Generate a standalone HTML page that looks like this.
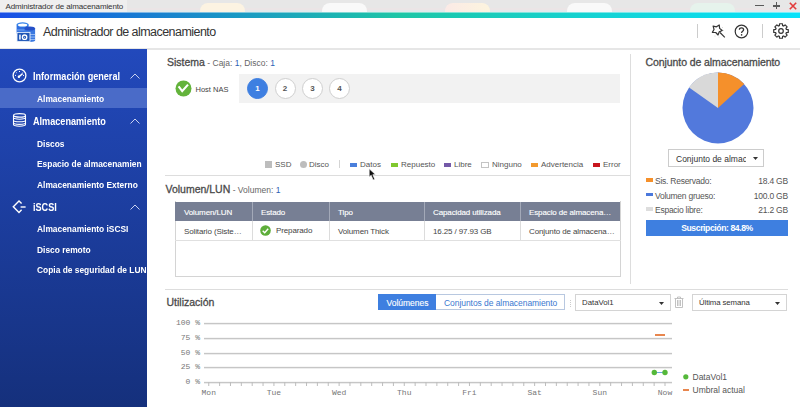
<!DOCTYPE html>
<html><head><meta charset="utf-8">
<style>
*{margin:0;padding:0;box-sizing:border-box}
html,body{width:800px;height:407px;overflow:hidden;background:#fff;font-family:"Liberation Sans",sans-serif;color:#333}
.a{position:absolute;white-space:nowrap;line-height:1}
#tb{position:absolute;left:0;top:0;width:800px;height:12px;background:#e7e7e7;overflow:hidden}
.blob{position:absolute;top:2.5px;width:45px;height:14px;border-radius:8px 8px 0 0;filter:blur(0.6px)}
#gl{position:absolute;left:0;top:12px;width:800px;height:6px;background:linear-gradient(90deg,#1a4fe6 0%,#1670d8 12.5%,#1a9cc2 31%,#1dc6a6 50%,#14d3d4 75%,#06e2fa 100%)}
#gl2{position:absolute;left:0;top:12px;width:800px;height:1px;background:rgba(255,255,255,0.45)}
#hd{position:absolute;left:0;top:18px;width:800px;height:32px;background:#fff;border-bottom:2px solid #e6e6e6}
#sb{position:absolute;z-index:2;left:0;top:48.5px;width:147px;height:358.5px;background:linear-gradient(180deg,#2249bc 0%,#15307c 100%);overflow:hidden}
.sh{position:absolute;white-space:nowrap;line-height:1;left:33px;color:#fff;font-weight:bold;font-size:10.5px;transform:scaleX(0.867);transform-origin:0 0}
.si{position:absolute;white-space:nowrap;line-height:1;left:37px;color:#fff;font-weight:bold;font-size:9.8px;transform:scaleX(0.857);transform-origin:0 0}
.chev{position:absolute;left:130px;width:10px;height:6px}
.sel{position:absolute;left:0;width:147px;height:20px;background:#4a6bc8}
.gray{color:#666}
.blue{color:#2c62b4}
.circ{position:absolute;width:21px;height:21px;border-radius:50%;border:1px solid #cfcfcf;background:#fff;font-size:8px;font-weight:bold;text-align:center;line-height:19px;color:#555}
.lg{position:absolute;top:159.8px;font-size:8px;color:#555}
.sw{position:absolute;top:162.5px;width:7px;height:4px}
.th{position:absolute;top:202px;height:19px;background:#777f94;color:#fff;font-size:8px}
.td{position:absolute;font-size:8px;color:#444;letter-spacing:-0.12px}
.ya{position:absolute;font-family:"Liberation Mono",monospace;font-size:8px;color:#777;text-align:right;width:30px}
.xa{position:absolute;font-family:"Liberation Mono",monospace;font-size:8px;color:#777}
.gln{position:absolute;left:204px;width:468px;height:1px;background:#c6c6c6;box-shadow:0 1px 0 #ededed,0 -1px 0 #f6f6f6}
.rl{position:absolute;left:655px;font-size:8.5px;color:#555;letter-spacing:-0.25px}
.rv{position:absolute;right:12px;font-size:8.5px;color:#555;text-align:right;letter-spacing:-0.2px}
</style></head><body>

<!-- title bar -->
<div id="tb">
  <div style="position:absolute;left:0;top:8px;width:800px;height:4px;background:linear-gradient(180deg,#ebe5e6 0,#ebe5e6 45%,#e2e9eb 55%,#e2e9eb 100%)"></div>
    <div style="position:absolute;left:0;top:0;width:127px;height:12px;background:#efefef"></div>
  <div class="blob" style="left:200px;background:#fcf3e2"></div>
  <div class="blob" style="left:322px;background:#f9f9f9"></div>
  <div class="blob" style="left:445px;background:linear-gradient(90deg,#fbeae6,#fcf4de)"></div>
  <div class="blob" style="left:567px;background:#f9f9f9"></div>
  <div class="blob" style="left:690px;background:#e6f3ec"></div>
  <div class="a" style="left:5.5px;top:2.7px;font-size:8px;color:#333;letter-spacing:-0.12px">Administrador de almacenamiento</div>
  <div style="position:absolute;left:755px;top:4.8px;width:8.6px;height:1.7px;background:#5a5a5a"></div>
  <div style="position:absolute;left:772.6px;top:5px;width:7.4px;height:1.7px;background:#5a5a5a"></div>
  <div style="position:absolute;left:775.5px;top:2.1px;width:1.7px;height:7.4px;background:#5a5a5a"></div>
  <svg style="position:absolute;left:788.5px;top:1.8px" width="8" height="8" viewBox="0 0 8 8"><path d="M0.8 0.8L7.2 7.2M7.2 0.8L0.8 7.2" stroke="#e23a3a" stroke-width="1.6"/></svg>
</div>
<div id="gl"></div>
<div id="gl2"></div>

<!-- header -->
<div id="hd">
  <svg style="position:absolute;left:14px;top:2px" width="26" height="26" viewBox="0 0 26 26">
    <rect x="2.6" y="4.6" width="12" height="9" fill="#2f6fe0"/>
    <ellipse cx="8.6" cy="4.6" rx="6" ry="2.4" fill="#3a86ea"/>
    <ellipse cx="8.6" cy="5" rx="4.6" ry="1.5" fill="#fff"/>
    <rect x="2.6" y="9.6" width="12" height="0.8" fill="#8fb6f2"/>
    <rect x="10.5" y="8.6" width="10.6" height="12" fill="#3a78e0"/>
    <ellipse cx="15.8" cy="20.6" rx="5.3" ry="1.4" fill="#3a78e0"/>
    <ellipse cx="15.8" cy="8.6" rx="5.3" ry="2" fill="#2550c8"/>
    <rect x="10.5" y="14" width="10.6" height="0.9" fill="#9cc0f5"/>
    <rect x="10.5" y="16.6" width="10.6" height="0.9" fill="#9cc0f5"/>
    <rect x="10.5" y="19" width="10.6" height="0.9" fill="#9cc0f5"/>
    <rect x="3" y="12.4" width="13" height="9" fill="#1f56b6" stroke="#e8f0fb" stroke-width="0.9"/>
    <rect x="5.2" y="14.6" width="1.5" height="5" fill="#fff"/>
    <circle cx="10.6" cy="17.2" r="2.2" fill="none" stroke="#fff" stroke-width="1.3"/>
    <circle cx="10.6" cy="17.2" r="0.5" fill="#fff"/>
  </svg>
  <div class="a" style="left:43px;top:8px;font-size:12.5px;color:#333;letter-spacing:-0.55px">Administrador de almacenamiento</div>
  <div style="position:absolute;left:697px;top:6px;width:1px;height:14px;background:#ccc"></div>
  <div style="position:absolute;left:762px;top:6px;width:1px;height:14px;background:#ccc"></div>
  <svg style="position:absolute;left:709px;top:5px" width="18" height="17" viewBox="0 0 18 17">
    <path d="M10.24 2.00 L10.62 5.35 L13.26 7.45 L10.19 8.85 L9.01 12.00 L6.73 9.52 L3.36 9.37 L5.02 6.43 L4.12 3.19 L7.43 3.86Z" fill="none" stroke="#333" stroke-width="1.2" stroke-linejoin="round"/>
    <path d="M11 9.5L15.8 14.3" stroke="#333" stroke-width="1.2"/>
    <circle cx="13.5" cy="4.5" r=".4" fill="#aaa"/><circle cx="14.5" cy="7.5" r=".4" fill="#aaa"/><circle cx="6" cy="13" r=".4" fill="#aaa"/><circle cx="10" cy="14" r=".4" fill="#aaa"/>
  </svg>
  <svg style="position:absolute;left:734px;top:6px" width="15" height="15" viewBox="0 0 15 15">
    <circle cx="7.5" cy="7.5" r="6.3" fill="none" stroke="#333" stroke-width="1.2"/>
    <path d="M5.4 5.8C5.4 4.5 6.3 3.8 7.5 3.8C8.7 3.8 9.6 4.5 9.6 5.7C9.6 7.2 7.6 7.3 7.6 8.9" fill="none" stroke="#333" stroke-width="1.3"/>
    <circle cx="7.6" cy="10.9" r="0.8" fill="#333"/>
  </svg>
  <svg style="position:absolute;left:772px;top:4.4px" width="18" height="18" viewBox="0 0 18 18">
    <path d="M7.40 3.63 L7.56 1.74 L10.44 1.74 L10.60 3.63 L11.66 4.07 L13.11 2.85 L15.15 4.89 L13.93 6.34 L14.37 7.40 L16.26 7.56 L16.26 10.44 L14.37 10.60 L13.93 11.66 L15.15 13.11 L13.11 15.15 L11.66 13.93 L10.60 14.37 L10.44 16.26 L7.56 16.26 L7.40 14.37 L6.34 13.93 L4.89 15.15 L2.85 13.11 L4.07 11.66 L3.63 10.60 L1.74 10.44 L1.74 7.56 L3.63 7.40 L4.07 6.34 L2.85 4.89 L4.89 2.85 L6.34 4.07Z" fill="none" stroke="#333" stroke-width="1.2" stroke-linejoin="round"/>
    <circle cx="9" cy="9" r="2.3" fill="none" stroke="#333" stroke-width="1.2"/>
  </svg>
</div>

<!-- sidebar -->
<div id="sb">
  <div class="sel" style="top:39px"></div>
  <!-- gauge icon -->
  <svg style="position:absolute;left:11.5px;top:19px" width="15" height="15" viewBox="0 0 15 15">
    <circle cx="7.5" cy="7.5" r="6.4" fill="none" stroke="#fff" stroke-width="1.3"/>
    <path d="M4.4 4.6l.6.6M7.5 3v1M10.6 4.6l-.6.6M3 7.4h1M11 7.4h1" stroke="#fff" stroke-width="1"/>
    <path d="M6.8 8.8L10.2 6" stroke="#fff" stroke-width="1.5" stroke-linecap="round"/>
    <circle cx="6.9" cy="8.7" r="1.2" fill="#fff"/>
  </svg>
  <div class="sh" style="top:22px">Información general</div>
  <svg class="chev" style="top:24px" viewBox="0 0 10 6"><path d="M0.5 5.5L5 1L9.5 5.5" fill="none" stroke="#c8d2f0" stroke-width="1"/></svg>
  <div class="si" style="top:45px">Almacenamiento</div>
  <!-- db icon -->
  <svg style="position:absolute;left:12px;top:64px" width="15" height="15" viewBox="0 0 15 15">
    <ellipse cx="7.5" cy="2.4" rx="6" ry="1.7" fill="none" stroke="#fff" stroke-width="1.2"/>
    <path d="M1.5 2.4v9.2c0 .9 2.7 1.6 6 1.6s6-.7 6-1.6V2.4M1.5 4.6c0 .9 2.7 1.6 6 1.6s6-.7 6-1.6M1.5 7.2c0 .9 2.7 1.6 6 1.6s6-.7 6-1.6M1.5 9.8c0 .9 2.7 1.6 6 1.6s6-.7 6-1.6" fill="none" stroke="#fff" stroke-width="1.1"/>
  </svg>
  <div class="sh" style="top:67px">Almacenamiento</div>
  <svg class="chev" style="top:69px" viewBox="0 0 10 6"><path d="M0.5 5.5L5 1L9.5 5.5" fill="none" stroke="#c8d2f0" stroke-width="1"/></svg>
  <div class="si" style="top:90.4px">Discos</div>
  <div class="si" style="top:110.9px">Espacio de almacenamien</div>
  <div class="si" style="top:131.4px">Almacenamiento Externo</div>
  <!-- iscsi icon -->
  <svg style="position:absolute;left:11px;top:151px" width="16" height="15" viewBox="0 0 16 15">
    <path d="M10.6 3.6L8 1L2.3 6.7L8 12.4L10.6 9.8" fill="none" stroke="#fff" stroke-width="1.4" stroke-linejoin="miter"/>
    <path d="M9.6 7H14.6" stroke="#fff" stroke-width="1.4"/>
  </svg>
  <div class="sh" style="top:153.5px">iSCSI</div>
  <svg class="chev" style="top:155px" viewBox="0 0 10 6"><path d="M0.5 5.5L5 1L9.5 5.5" fill="none" stroke="#c8d2f0" stroke-width="1"/></svg>
  <div class="si" style="top:175.9px">Almacenamiento iSCSI</div>
  <div class="si" style="top:196.4px">Disco remoto</div>
  <div class="si" style="top:216.9px">Copia de seguridad de LUN</div>
</div>

<!-- main: Sistema -->
<div class="a" style="left:167px;top:57px;font-size:10.5px;color:#4a4a4a;-webkit-text-stroke:0.3px #4a4a4a">Sistema<span style="font-size:8.5px;-webkit-text-stroke:0" class="gray"> - Caja: <span class="blue">1</span>, Disco: <span class="blue">1</span></span></div>
<svg style="position:absolute;left:175px;top:80px" width="17" height="17" viewBox="0 0 17 17"><circle cx="8.5" cy="8.5" r="8" fill="#63b33b"/><path d="M3.6 6.4L7.2 11.2L13 4.6" fill="none" stroke="#fff" stroke-width="2.1"/></svg>
<div class="a" style="left:195.5px;top:85.5px;font-size:7.5px;color:#444">Host NAS</div>
<div style="position:absolute;left:239px;top:74px;width:381px;height:29px;background:#f2f2f2"></div>
<div class="circ" style="left:247px;top:78px;background:#3e7fe1;border-color:#3e7fe1;color:#fff">1</div>
<div class="circ" style="left:274.5px;top:78px">2</div>
<div class="circ" style="left:302px;top:78px">3</div>
<div class="circ" style="left:329px;top:78px">4</div>

<!-- legend -->
<div class="sw" style="left:265px;top:161px;width:7px;height:7px;background:#bdbdbd"></div>
<div class="lg" style="left:275px">SSD</div>
<div class="sw" style="left:300px;top:161px;width:7px;height:7px;border-radius:50%;background:#bdbdbd"></div>
<div class="lg" style="left:309px">Disco</div>
<div style="position:absolute;left:339px;top:160px;width:1px;height:8px;background:#d4d4d4"></div>
<div class="sw" style="left:350px;background:#4a7fdc"></div>
<div class="lg" style="left:360px">Datos</div>
<div class="sw" style="left:391px;background:#80c82e"></div>
<div class="lg" style="left:401px">Repuesto</div>
<div class="sw" style="left:444px;background:#7459a8"></div>
<div class="lg" style="left:454px">Libre</div>
<div class="sw" style="left:481px;top:161.5px;width:8px;height:6px;border:1px solid #c4c4c4;background:#fff"></div>
<div class="lg" style="left:492px">Ninguno</div>
<div class="sw" style="left:531px;background:#f39a2e"></div>
<div class="lg" style="left:541px">Advertencia</div>
<div class="sw" style="left:593px;background:#c8161e"></div>
<div class="lg" style="left:603px">Error</div>


<div style="position:absolute;left:165px;top:175px;width:466px;height:1px;background:#ddd"></div>
<div style="position:absolute;left:630px;top:54px;width:1px;height:230px;background:#ddd"></div>

<!-- Volumen/LUN -->
<div class="a" style="left:165.5px;top:184px;font-size:10.5px;color:#4a4a4a;-webkit-text-stroke:0.3px #4a4a4a">Volumen/LUN<span style="font-size:8.5px;-webkit-text-stroke:0" class="gray"> - Volumen: <span class="blue">1</span></span></div>
<div style="position:absolute;left:175px;top:201px;width:446px;height:76px;border:1px solid #d4d4d4;border-top:none"></div>
<div class="th" style="left:175px;width:445px"></div>
<div style="position:absolute;left:252px;top:202px;width:1px;height:19px;background:#a3a9b8"></div><div style="position:absolute;left:252px;top:221px;width:1px;height:19px;background:#dcdcdc"></div>
<div style="position:absolute;left:329px;top:202px;width:1px;height:19px;background:#a3a9b8"></div><div style="position:absolute;left:329px;top:221px;width:1px;height:19px;background:#dcdcdc"></div>
<div style="position:absolute;left:424px;top:202px;width:1px;height:19px;background:#a3a9b8"></div><div style="position:absolute;left:424px;top:221px;width:1px;height:19px;background:#dcdcdc"></div>
<div style="position:absolute;left:520px;top:202px;width:1px;height:19px;background:#a3a9b8"></div><div style="position:absolute;left:520px;top:221px;width:1px;height:19px;background:#dcdcdc"></div>
<div style="position:absolute;left:175px;top:240px;width:446px;height:1px;background:#e0e0e0"></div>
<div class="a td" style="left:184px;top:209px;color:#fff;-webkit-text-stroke:0.12px #fff">Volumen/LUN</div>
<div class="a td" style="left:261px;top:209px;color:#fff;-webkit-text-stroke:0.12px #fff">Estado</div>
<div class="a td" style="left:338px;top:209px;color:#fff;-webkit-text-stroke:0.12px #fff">Tipo</div>
<div class="a td" style="left:433px;top:209px;color:#fff;-webkit-text-stroke:0.12px #fff">Capacidad utilizada</div>
<div class="a td" style="left:529px;top:209px;color:#fff;-webkit-text-stroke:0.12px #fff">Espacio de almacena…</div>
<div class="a td" style="left:184px;top:228px">Solitario (Siste…</div>
<svg style="position:absolute;left:260px;top:224.5px" width="11" height="11" viewBox="0 0 11 11"><circle cx="5.5" cy="5.5" r="5.3" fill="#5eae3a"/><path d="M2.7 5.7L4.7 7.7L8.2 3.7" fill="none" stroke="#fff" stroke-width="1.4"/></svg>
<div class="a td" style="left:276px;top:226.5px">Preparado</div>
<div class="a td" style="left:338px;top:228px">Volumen Thick</div>
<div class="a td" style="left:433px;top:228px">16.25 / 97.93 GB</div>
<div class="a td" style="left:529px;top:228px">Conjunto de almacena…</div>

<!-- right panel -->
<div class="a" style="left:645.5px;top:57px;font-size:10.5px;color:#4a4a4a;letter-spacing:-0.08px;-webkit-text-stroke:0.3px #4a4a4a">Conjunto de almacenamiento</div>
<svg style="position:absolute;left:682px;top:72px" width="72" height="72" viewBox="-36 -36 72 72">
  <circle r="35.5" fill="#5279dc"/>
  <path d="M0 0L0 -35.5A35.5 35.5 0 0 1 26.2 -23.9Z" fill="#f5902b"/>
  <path d="M0 0L-28.9 -20.6A35.5 35.5 0 0 1 0 -35.5Z" fill="#d9d9d9"/>
</svg>
<div style="position:absolute;left:668px;top:149px;width:96px;height:18px;border:1px solid #ccc;background:#fff"></div>
<div class="a" style="left:676px;top:155px;font-size:8.5px;color:#333;width:70px;overflow:hidden">Conjunto de almacenamiento</div>
<svg style="position:absolute;left:752.5px;top:157px" width="5" height="3" viewBox="0 0 5 3"><path d="M0 0H5L2.5 3Z" fill="#333"/></svg>
<div style="position:absolute;left:646px;top:178.4px;width:6.5px;height:3.3px;background:#f5902b"></div>
<div style="position:absolute;left:646px;top:192.6px;width:6.5px;height:3.3px;background:#4a78dc"></div>
<div style="position:absolute;left:646px;top:207.4px;width:6.5px;height:3.3px;background:#ddd"></div>
<div class="a rl" style="top:177.4px">Sis. Reservado:</div>
<div class="a rl" style="top:191.6px">Volumen grueso:</div>
<div class="a rl" style="top:205.8px">Espacio libre:</div>
<div class="a rv" style="top:177.4px">18.4 GB</div>
<div class="a rv" style="top:191.6px">100.0 GB</div>
<div class="a rv" style="top:205.8px">21.2 GB</div>
<div style="position:absolute;left:646px;top:219.5px;width:142px;height:16.5px;background:#3e7fe0"></div>
<div class="a" style="left:646px;top:224px;width:142px;text-align:center;font-size:8.6px;font-weight:bold;letter-spacing:-0.4px;color:#fff">Suscripción: 84.8%</div>

<!-- Utilización -->
<div style="position:absolute;left:165px;top:289px;width:623px;height:1px;background:#ddd"></div>
<div class="a" style="left:166.5px;top:297px;font-size:10.5px;color:#4a4a4a;-webkit-text-stroke:0.3px #4a4a4a">Utilización</div>
<div style="position:absolute;left:378px;top:294px;width:58px;height:16px;background:#3e7fe0"></div>
<div class="a" style="left:386.5px;top:298.7px;font-size:8.5px;color:#fff;-webkit-text-stroke:0.12px #fff">Volúmenes</div>
<div style="position:absolute;left:436px;top:294px;width:129px;height:16px;border:1px solid #b8c8e0;border-left:none;background:#fff"></div>
<div class="a" style="left:444px;top:298.7px;font-size:8.5px;color:#3a78d0;letter-spacing:-0.06px">Conjuntos de almacenamiento</div>
<div style="position:absolute;left:570px;top:300px;width:1px;height:7px;border-left:1px dotted #ccc"></div>
<div style="position:absolute;left:575px;top:294px;width:96px;height:16.5px;border:1px solid #d4d4d4;background:#fff"></div>
<div class="a" style="left:582px;top:299px;font-size:7.8px;color:#333">DataVol1</div>
<svg style="position:absolute;left:659px;top:301.5px" width="5" height="3" viewBox="0 0 5 3"><path d="M0 0H5L2.5 3Z" fill="#333"/></svg>
<svg style="position:absolute;left:673px;top:296px" width="12" height="12" viewBox="0 0 12 12"><path d="M1.5 2.5H10.5M4.5 2.5V1H7.5V2.5M2.5 2.5V11.5H9.5V2.5M4.5 4V10M6 4V10M7.5 4V10" fill="none" stroke="#bbb" stroke-width="0.9"/></svg>
<div style="position:absolute;left:691.5px;top:293.5px;width:95.5px;height:17.5px;border:1px solid #d4d4d4;background:#fff"></div>
<div class="a" style="left:699px;top:299px;font-size:7.8px;color:#333;letter-spacing:-0.1px">Última semana</div>
<svg style="position:absolute;left:775px;top:301.5px" width="5" height="3" viewBox="0 0 5 3"><path d="M0 0H5L2.5 3Z" fill="#333"/></svg>

<!-- chart -->
<div class="ya" style="left:170px;top:318px">100 %</div>
<div class="ya" style="left:170px;top:332.5px">75 %</div>
<div class="ya" style="left:170px;top:347.5px">50 %</div>
<div class="ya" style="left:170px;top:361.5px">25 %</div>
<div class="ya" style="left:170px;top:376.5px">0 %</div>
<div class="gln" style="top:323px"></div>
<div class="gln" style="top:338px"></div>
<div class="gln" style="top:353px"></div>
<div class="gln" style="top:367px"></div>
<div class="gln" style="top:382px"></div>
<svg style="position:absolute;left:200px;top:382px" width="475" height="6"><path d="M8.75 0V4" stroke="#bdbdbd" stroke-width="1"/><path d="M19.61 0V4" stroke="#bdbdbd" stroke-width="1"/><path d="M30.48 0V4" stroke="#bdbdbd" stroke-width="1"/><path d="M41.34 0V4" stroke="#bdbdbd" stroke-width="1"/><path d="M52.20 0V4" stroke="#bdbdbd" stroke-width="1"/><path d="M63.06 0V4" stroke="#bdbdbd" stroke-width="1"/><path d="M73.93 0V4" stroke="#bdbdbd" stroke-width="1"/><path d="M84.79 0V4" stroke="#bdbdbd" stroke-width="1"/><path d="M95.65 0V4" stroke="#bdbdbd" stroke-width="1"/><path d="M106.52 0V4" stroke="#bdbdbd" stroke-width="1"/><path d="M117.38 0V4" stroke="#bdbdbd" stroke-width="1"/><path d="M128.24 0V4" stroke="#bdbdbd" stroke-width="1"/><path d="M139.11 0V4" stroke="#bdbdbd" stroke-width="1"/><path d="M149.97 0V4" stroke="#bdbdbd" stroke-width="1"/><path d="M160.83 0V4" stroke="#bdbdbd" stroke-width="1"/><path d="M171.69 0V4" stroke="#bdbdbd" stroke-width="1"/><path d="M182.56 0V4" stroke="#bdbdbd" stroke-width="1"/><path d="M193.42 0V4" stroke="#bdbdbd" stroke-width="1"/><path d="M204.28 0V4" stroke="#bdbdbd" stroke-width="1"/><path d="M215.15 0V4" stroke="#bdbdbd" stroke-width="1"/><path d="M226.01 0V4" stroke="#bdbdbd" stroke-width="1"/><path d="M236.87 0V4" stroke="#bdbdbd" stroke-width="1"/><path d="M247.74 0V4" stroke="#bdbdbd" stroke-width="1"/><path d="M258.60 0V4" stroke="#bdbdbd" stroke-width="1"/><path d="M269.46 0V4" stroke="#bdbdbd" stroke-width="1"/><path d="M280.32 0V4" stroke="#bdbdbd" stroke-width="1"/><path d="M291.19 0V4" stroke="#bdbdbd" stroke-width="1"/><path d="M302.05 0V4" stroke="#bdbdbd" stroke-width="1"/><path d="M312.91 0V4" stroke="#bdbdbd" stroke-width="1"/><path d="M323.78 0V4" stroke="#bdbdbd" stroke-width="1"/><path d="M334.64 0V4" stroke="#bdbdbd" stroke-width="1"/><path d="M345.50 0V4" stroke="#bdbdbd" stroke-width="1"/><path d="M356.37 0V4" stroke="#bdbdbd" stroke-width="1"/><path d="M367.23 0V4" stroke="#bdbdbd" stroke-width="1"/><path d="M378.09 0V4" stroke="#bdbdbd" stroke-width="1"/><path d="M388.95 0V4" stroke="#bdbdbd" stroke-width="1"/><path d="M399.82 0V4" stroke="#bdbdbd" stroke-width="1"/><path d="M410.68 0V4" stroke="#bdbdbd" stroke-width="1"/><path d="M421.54 0V4" stroke="#bdbdbd" stroke-width="1"/><path d="M432.41 0V4" stroke="#bdbdbd" stroke-width="1"/><path d="M443.27 0V4" stroke="#bdbdbd" stroke-width="1"/><path d="M454.13 0V4" stroke="#bdbdbd" stroke-width="1"/><path d="M465.00 0V4" stroke="#bdbdbd" stroke-width="1"/></svg>
<div class="xa" style="left:193.75px;top:388px;width:30px;text-align:center">Mon</div>
<div class="xa" style="left:258.93px;top:388px;width:30px;text-align:center">Tue</div>
<div class="xa" style="left:324.11px;top:388px;width:30px;text-align:center">Wed</div>
<div class="xa" style="left:389.28px;top:388px;width:30px;text-align:center">Thu</div>
<div class="xa" style="left:454.46px;top:388px;width:30px;text-align:center">Fri</div>
<div class="xa" style="left:519.64px;top:388px;width:30px;text-align:center">Sat</div>
<div class="xa" style="left:584.82px;top:388px;width:30px;text-align:center">Sun</div>
<div class="xa" style="left:650.00px;top:388px;width:30px;text-align:center">Now</div>
<div style="position:absolute;left:655px;top:334px;width:10px;height:1.6px;background:#e8864e"></div>
<svg style="position:absolute;left:650px;top:368px" width="20" height="9" viewBox="0 0 20 9"><path d="M4.3 4.5H15" stroke="#6aa8e0" stroke-width="1"/><circle cx="4.3" cy="4.5" r="2.7" fill="#55b83a"/><circle cx="15" cy="4.5" r="2.7" fill="#55b83a"/></svg>
<svg style="position:absolute;left:683px;top:373.5px" width="6" height="6"><circle cx="2.8" cy="2.8" r="2.6" fill="#55b83a"/></svg>
<div class="a" style="left:692.5px;top:372.5px;font-size:8.5px;color:#555">DataVol1</div>
<div style="position:absolute;left:682.5px;top:389.3px;width:6.3px;height:1.5px;background:#e8864e"></div>
<div class="a" style="left:692.5px;top:386px;font-size:8.5px;color:#555">Umbral actual</div>


<svg style="position:absolute;z-index:5;left:368px;top:168px" width="10" height="14" viewBox="0 0 10 14"><path d="M1.2 0.8V9L3.2 7.2L5.1 11.9L6.7 11.2L4.8 6.7L7.4 6.5Z" fill="#111" stroke="#fff" stroke-width="0.6" stroke-linejoin="round"/></svg>
</body></html>
